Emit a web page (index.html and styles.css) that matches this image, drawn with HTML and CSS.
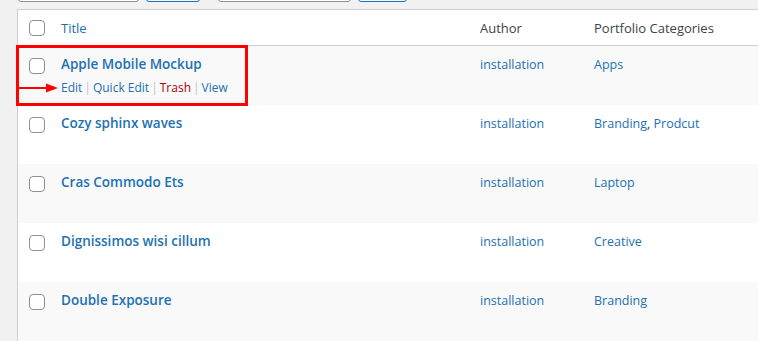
FILE: index.html
```
<!DOCTYPE html>
<html lang="en">
<head>
  <meta charset="UTF-8" />
  <title>Portfolio</title>
  <link rel="stylesheet" href="styles.css">
</head>
<body>
  <div class="wrap">
    <div class="tablenav">
      <div class="actions">
        <span class="select bulk"></span>
        <span class="button apply"></span>
      </div>
      <div class="actions">
        <span class="select cats"></span>
        <span class="button filter"></span>
      </div>
    </div>

    <table class="posts">
      <thead>
        <tr>
          <td class="check"><span class="box"></span></td>
          <th class="col-title"><a href="#">Title</a></th>
          <th class="col-author">Author</th>
          <th class="col-cats">Portfolio Categories</th>
        </tr>
      </thead>
      <tbody>
        <tr class="alt first">
          <td class="check"><span class="box"></span></td>
          <td class="col-title">
            <a class="row-title" href="#">Apple Mobile Mockup</a>
            <div class="row-actions">
              <a href="#">Edit</a><span class="sep">|</span><a href="#">Quick&nbsp;Edit</a><span class="sep">|</span><a class="trash" href="#">Trash</a><span class="sep">|</span><a href="#">View</a>
            </div>
            <div class="highlight"></div>
            <svg class="arrow" width="42" height="12" viewBox="0 0 42 12">
              <line x1="0" y1="6" x2="30" y2="6" stroke="#f00" stroke-width="2" />
              <polygon points="28,1.5 40,6 28,10.5" fill="#f00" />
            </svg>
          </td>
          <td class="col-author"><a href="#">installation</a></td>
          <td class="col-cats"><a href="#">Apps</a></td>
        </tr>
        <tr>
          <td class="check"><span class="box"></span></td>
          <td class="col-title"><a class="row-title" href="#">Cozy sphinx waves</a></td>
          <td class="col-author"><a href="#">installation</a></td>
          <td class="col-cats"><a href="#">Branding</a>, <a href="#">Prodcut</a></td>
        </tr>
        <tr class="alt">
          <td class="check"><span class="box"></span></td>
          <td class="col-title"><a class="row-title" href="#">Cras Commodo Ets</a></td>
          <td class="col-author"><a href="#">installation</a></td>
          <td class="col-cats"><a href="#">Laptop</a></td>
        </tr>
        <tr>
          <td class="check"><span class="box"></span></td>
          <td class="col-title"><a class="row-title" href="#">Dignissimos wisi cillum</a></td>
          <td class="col-author"><a href="#">installation</a></td>
          <td class="col-cats"><a href="#">Creative</a></td>
        </tr>
        <tr class="alt">
          <td class="check"><span class="box"></span></td>
          <td class="col-title"><a class="row-title" href="#">Double Exposure</a></td>
          <td class="col-author"><a href="#">installation</a></td>
          <td class="col-cats"><a href="#">Branding</a></td>
        </tr>
      </tbody>
    </table>
  </div>
</body>
</html>
```

FILE: styles.css
```
body {
  margin: 0;
  background: #f1f1f1;
  font-family: "Open Sans", "Noto Sans", sans-serif;
  font-size: 12.5px;
  color: #3c434a;
  overflow: hidden;
}

a {
  color: #2271b1;
  text-decoration: none;
}

.wrap {
  padding-left: 17px;
}

/* top bulk/filter bar, mostly scrolled off */
.tablenav {
  display: flex;
  gap: 18px;
  height: 30px;
  margin-top: -28px;
  margin-bottom: 7px;
  padding-left: 1px;
}

.actions {
  display: flex;
  gap: 7px;
}

.select, .button {
  display: block;
  height: 28px;
  border-radius: 3px;
  background: #fff;
}

.select {
  border: 1px solid #8c8f94;
}

.button {
  border: 1px solid #2271b1;
  background: #f6f7f7;
}

.bulk { width: 119px; }
.apply { width: 52px; }
.cats { width: 131px; }
.filter { width: 47px; }

.posts {
  width: 820px;
  border-collapse: collapse;
  background: #fff;
  border: 1px solid #ccd0d4;
  border-bottom: none;
  table-layout: fixed;
}

thead th, thead td {
  height: 35px;
  padding: 0 10px;
  text-align: left;
  font-weight: normal;
  font-size: 13px;
  border-bottom: 1px solid #ccd0d4;
  vertical-align: middle;
}

tbody td {
  height: 59px;
  padding: 8px 10px 0;
  vertical-align: top;
  box-sizing: border-box;
}

tbody td.col-author, tbody td.col-cats {
  padding-top: 10px;
}

tbody tr.alt {
  background: #f9f9f9;
}

.check {
  width: 22px;
  padding: 0 0 0 11px !important;
}

tbody .check {
  padding-top: 12px !important;
}

.col-title {
  width: 399px;
  position: relative;
}

.col-author {
  width: 94px;
}

.box {
  display: block;
  width: 14px;
  height: 14px;
  border: 1px solid #8c8f94;
  border-radius: 4px;
  background: #fff;
}

.row-title {
  font-size: 13.5px;
  font-weight: 600;
  line-height: 20px;
  display: block;
}

.row-actions {
  padding-top: 4px;
  font-size: 12px;
  line-height: 20px;
}

.sep {
  color: #c3c4c7;
  padding: 0 2px;
}

.trash {
  color: #a00;
}

/* annotation overlay */
.highlight {
  position: absolute;
  left: -35px;
  top: -1px;
  width: 226px;
  height: 55px;
  border: 3px solid #f00;
}

.arrow {
  position: absolute;
  left: -33px;
  top: 36px;
}
```
